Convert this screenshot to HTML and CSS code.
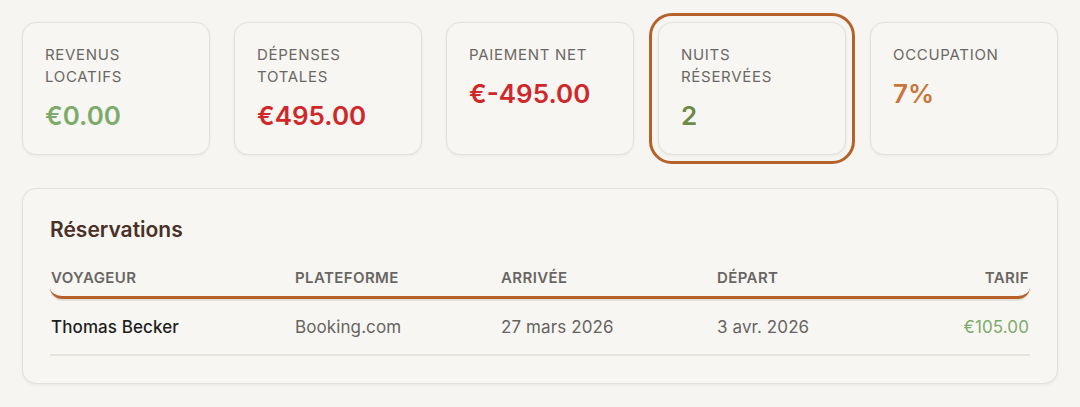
FILE: index.html
```html
<!DOCTYPE html>
<html lang="fr">
<head>
    <meta charset="UTF-8">
    <meta name="viewport" content="width=device-width, initial-scale=1.0">
    <title>Tableau de bord</title>
    <link rel="stylesheet" href="styles.css">
</head>
<body>
    <div class="stats">
        <div class="stat-card">
            <div class="stat-label">Revenus locatifs</div>
            <div class="stat-value green">€0.00</div>
        </div>
        <div class="stat-card">
            <div class="stat-label">Dépenses totales</div>
            <div class="stat-value red">€495.00</div>
        </div>
        <div class="stat-card">
            <div class="stat-label">Paiement net</div>
            <div class="stat-value red">€-495.00</div>
        </div>
        <div class="stat-card focused">
            <div class="stat-label">Nuits réservées</div>
            <div class="stat-value olive">2</div>
        </div>
        <div class="stat-card">
            <div class="stat-label">Occupation</div>
            <div class="stat-value orange">7%</div>
        </div>
    </div>

    <div class="panel">
        <h2>Réservations</h2>
        <table class="bookings">
            <thead>
                <tr>
                    <th class="col-guest">Voyageur</th>
                    <th class="col-platform">Plateforme</th>
                    <th class="col-in">Arrivée</th>
                    <th class="col-out">Départ</th>
                    <th class="col-rate">Tarif</th>
                </tr>
            </thead>
            <tbody>
                <tr>
                    <td class="guest">Thomas Becker</td>
                    <td>Booking.com</td>
                    <td>27 mars 2026</td>
                    <td>3 avr. 2026</td>
                    <td class="col-rate rate">€105.00</td>
                </tr>
            </tbody>
        </table>
    </div>
</body>
</html>
```

FILE: styles.css
```css
body {
    margin: 0;
    padding: 22px 22px;
    font-family: Inter, Lato, sans-serif;
    background-color: #f7f5f1;
    color: #2a2a2a;
}
.stats {
    display: grid;
    grid-template-columns: repeat(5, 1fr);
    gap: 24px;
}
.stat-card {
    height: 133px;
    box-sizing: border-box;
    padding: 21px 22px;
    background-color: #f8f6f2;
    border: 1px solid #e4e1dc;
    border-radius: 14px;
    box-shadow: 0 1px 3px rgba(0, 0, 0, 0.06);
}
.stat-card.focused {
    outline: 3px solid #b5622a;
    outline-offset: 6px;
}
.stat-label {
    font-size: 15px;
    line-height: 22px;
    letter-spacing: 0.7px;
    text-transform: uppercase;
    color: #6a6865;
    width: 130px;
}
.stat-value {
    margin-top: 13px;
    font-size: 26px;
    font-weight: 600;
    line-height: 30px;
}
.green { color: #7dab6b; }
.red { color: #d0272a; }
.olive { color: #6f8a48; }
.orange { color: #c87539; }

.panel {
    margin-top: 33px;
    padding: 28px 27px 27px;
    background-color: #f8f6f2;
    border: 1px solid #e4e1dc;
    border-radius: 14px;
    box-shadow: 0 1px 3px rgba(0, 0, 0, 0.06);
}
.panel h2 {
    margin: 0 0 25px;
    font-size: 21px;
    line-height: 26px;
    font-weight: 600;
    color: #4a3026;
}
.bookings {
    width: 100%;
    table-layout: fixed;
    border-collapse: separate;
    border-spacing: 0;
}
.bookings thead th {
    text-align: left;
    font-size: 15px;
    font-weight: 600;
    letter-spacing: 0.4px;
    text-transform: uppercase;
    color: #686664;
    padding: 0 1px 9px;
    border-bottom: 3px solid #b5622a;
    box-shadow: 0 2px 0 #e4e1dc;
}
.bookings thead th:first-child {
    border-bottom-left-radius: 12px;
}
.bookings thead th:last-child {
    border-bottom-right-radius: 12px;
}
.bookings td {
    font-size: 17px;
    letter-spacing: 0.1px;
    color: #666462;
    padding: 18px 1px 17px;
    border-bottom: 2px solid #e6e3de;
}
.col-guest { width: 242px; }
.col-platform { width: 204px; }
.col-in { width: 214px; }
.bookings .col-rate { text-align: right; }
.bookings .guest { color: #1f1f1f; font-weight: 500; }
.bookings .rate { color: #7dab6b; }
```
